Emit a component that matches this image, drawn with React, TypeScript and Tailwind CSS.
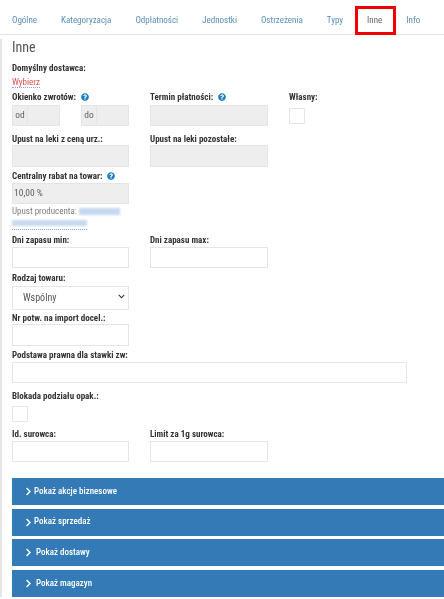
import { FaChevronDown, FaChevronRight, FaQuestionCircle } from "react-icons/fa"

const tabs = [
	"Ogólne",
	"Kategoryzacja",
	"Odpłatności",
	"Jednostki",
	"Ostrzeżenia",
	"Typy",
	"Inne",
	"Info",
]

const bars = [
	{ label: "Pokaż akcje biznesowe", gap: "gap-[1px]" },
	{ label: "Pokaż sprzedaż", gap: "gap-[1px]" },
	{ label: "Pokaż dostawy", gap: "gap-[3px]" },
	{ label: "Pokaż magazyn", gap: "gap-[3px]" },
]

function Label({ text, help }: { text: string; help?: boolean }) {
	return (
		<div className="flex h-[12px] items-center gap-[5px] text-[9px] leading-[12px] font-bold text-[#333] [font-stretch:75%]">
			<span className="whitespace-nowrap">{text}</span>
			{help && <FaQuestionCircle className="text-[8px] text-[#1b7fc4]" />}
		</div>
	)
}

function Field({ disabled, value, className }: { disabled?: boolean; value?: string; className: string }) {
	return (
		<div
			className={`flex items-center border border-[#e4e5e9] px-[1px] text-[9.5px] text-[#5f5f5f] [font-stretch:75%] ${
				disabled ? "bg-[#eeeeee]" : "bg-white"
			} ${className}`}>
			{value}
		</div>
	)
}

export default function App() {
	return (
		<div className="h-[599px] w-[444px] overflow-hidden bg-white font-['Roboto',sans-serif] blur-[0.3px]">
			{/* tabs */}
			<div className="relative flex h-[35px] items-start border-b border-[#e3e3e3] pt-[14px] text-[9px] leading-[12px] text-[#5b8fb9] [font-stretch:75%]">
				{tabs.map((t) => (
					<span key={t} className={`px-[12px] ${t === "Inne" ? "text-[#666b70]" : ""}`}>
						{t}
					</span>
				))}
				<div className="absolute top-[6px] left-[355px] h-[29px] w-[41px] border-[3px] border-[#f00000]" />
			</div>

			<div className="border-l-2 border-[#e6e6e6] pl-[10px]">
				<h3 className="mt-[4px] h-[16px] text-[14px] leading-[16px] text-[#555] [font-stretch:85%]">Inne</h3>

				<div className="mt-[7px]">
					<Label text="Domyślny dostawca:" />
				</div>
				<div className="mt-[2px] h-[12px] w-fit border-b border-dotted border-[#7fa8d6] text-[9px] leading-[12px] text-[#d9534f] [font-stretch:75%]">
					Wybierz
				</div>

				<div className="mt-[3px] flex">
					<div className="w-[138px]">
						<Label text="Okienko zwrotów:" help />
						<div className="mt-[2px] flex gap-[21px]">
							<div className="flex">
								<Field disabled value="od" className="h-[21px] w-[16px] justify-center" />
								<Field disabled className="h-[21px] w-[32px] border-l-0" />
							</div>
							<div className="flex">
								<Field disabled value="do" className="h-[21px] w-[16px] justify-center" />
								<Field disabled className="h-[21px] w-[32px] border-l-0" />
							</div>
						</div>
					</div>
					<div className="w-[139px]">
						<Label text="Termin płatności:" help />
						<Field disabled className="mt-[2px] h-[21px] w-[118px]" />
					</div>
					<div>
						<Label text="Własny:" />
						<div className="mt-[5px] h-[16px] w-[16px] rounded-[1px] border border-[#e4e5e9]" />
					</div>
				</div>

				<div className="mt-[7px] flex">
					<div className="w-[138px]">
						<Label text="Upust na leki z ceną urz.:" />
						<Field disabled className="h-[22px] w-[117px]" />
					</div>
					<div>
						<Label text="Upust na leki pozostałe:" />
						<Field disabled className="h-[22px] w-[118px]" />
					</div>
				</div>

				<div className="mt-[3px]">
					<Label text="Centralny rabat na towar:" help />
					<Field disabled value="10,00 %" className="mt-[1px] h-[21px] w-[117px]" />
				</div>

				<div className="mt-[1px] flex h-[12px] items-center text-[9px] leading-[12px] text-[#7d7d7d] [font-stretch:75%]">
					Upust producenta:
					<span className="ml-[2px] h-[7px] w-[41px] bg-[#c4d8f0] blur-[1px]" />
				</div>
				<div className="mt-[1px] h-[12px] w-[75px] border-b border-dotted border-[#7fa8d6] pt-[2px]">
					<div className="h-[6px] bg-[#c9d9ee] blur-[1px]" />
				</div>

				<div className="mt-[4px] flex">
					<div className="w-[138px]">
						<Label text="Dni zapasu min:" />
						<Field className="mt-[1px] h-[21px] w-[117px]" />
					</div>
					<div>
						<Label text="Dni zapasu max:" />
						<Field className="mt-[1px] h-[21px] w-[118px]" />
					</div>
				</div>

				<div className="mt-[4px]">
					<Label text="Rodzaj towaru:" />
					<div className="relative h-[24px] w-[117px]">
						<select className="h-full w-full appearance-none border border-[#e4e5e9] bg-white pl-[10px] text-[10px] text-[#555] [font-stretch:75%]">
							<option>Wspólny</option>
						</select>
						<FaChevronDown className="pointer-events-none absolute top-[9px] right-[4px] text-[7px] text-[#333]" />
					</div>
				</div>

				<div className="mt-[4px]">
					<Label text="Nr potw. na import docel.:" />
					<Field className="h-[22px] w-[117px]" />
				</div>

				<div className="mt-[3px]">
					<Label text="Podstawa prawna dla stawki zw:" />
					<Field className="mt-[1px] h-[21px] w-[395px]" />
				</div>

				<div className="mt-[7px]">
					<Label text="Blokada podziału opak.:" />
					<div className="mt-[4px] h-[16px] w-[16px] rounded-[1px] border border-[#e4e5e9]" />
				</div>

				<div className="mt-[6px] flex">
					<div className="w-[138px]">
						<Label text="Id. surowca:" />
						<Field className="mt-[1px] h-[21px] w-[117px]" />
					</div>
					<div>
						<Label text="Limit za 1g surowca:" />
						<Field className="mt-[1px] h-[21px] w-[118px]" />
					</div>
				</div>

				<div className="mt-[16px] flex flex-col gap-[3.67px]">
					{bars.map((b) => (
						<div
							key={b.label}
							className={`flex h-[27px] items-center bg-[#337ab7] pl-[12px] text-[9px] font-medium text-white [font-stretch:75%] ${b.gap}`}>
							<FaChevronRight className="text-[9px]" />
							{b.label}
						</div>
					))}
				</div>
			</div>
		</div>
	)
}
